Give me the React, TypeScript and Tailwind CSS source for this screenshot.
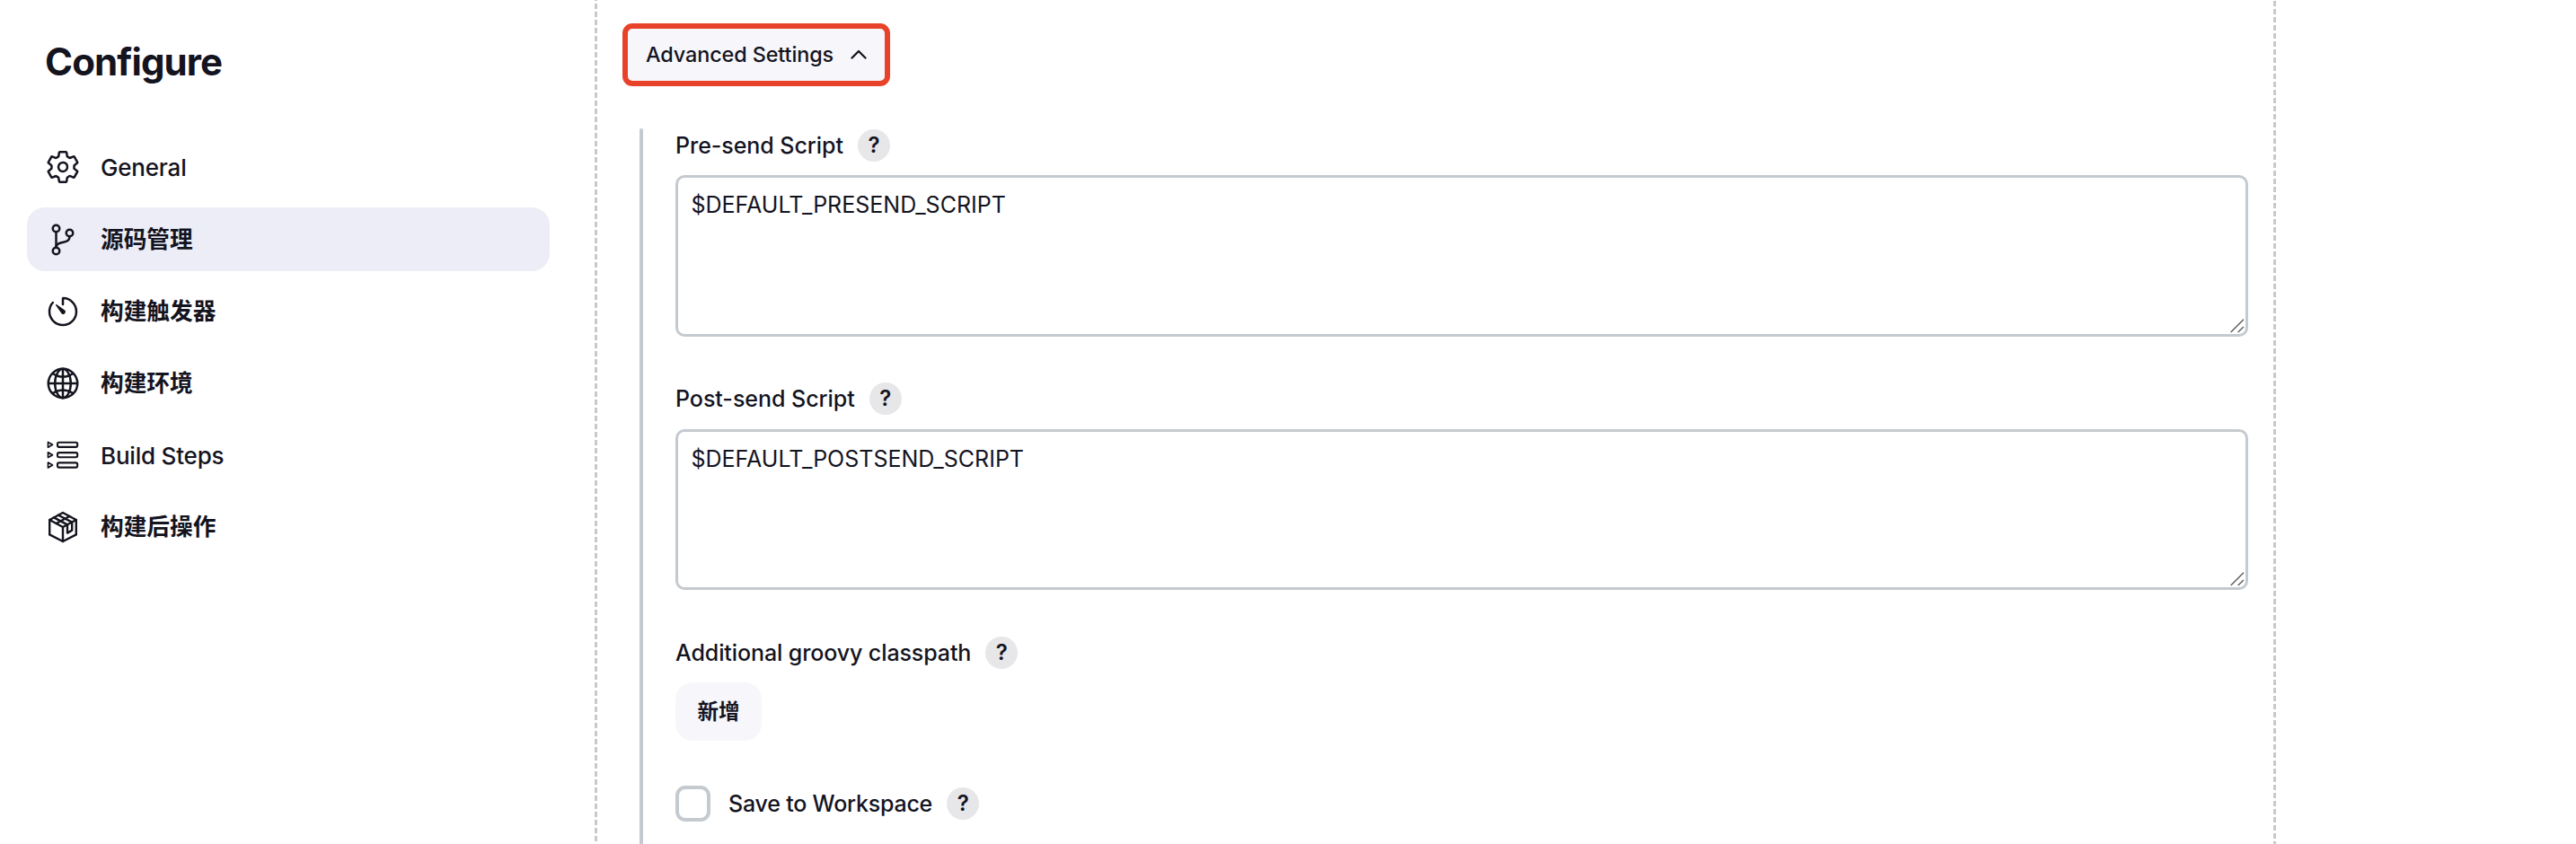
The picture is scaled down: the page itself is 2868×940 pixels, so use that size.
import type { ReactNode } from "react";
import { IoGitBranchOutline, IoGlobeOutline, IoSettingsOutline, IoTimerOutline } from "react-icons/io5";

function StepsIcon() {
  return (
    <svg viewBox="0 0 40 40" className="size-10" fill="none" stroke="currentColor" strokeWidth="2.1" strokeLinejoin="round">
      {[8.3, 19.7, 31].map((y) => (
        <g key={y}>
          <path d={`M3.5 ${y - 2.9}v5.8l5-2.9z`} strokeWidth="1.7" />
          <rect x="14" y={y - 2.6} width="22.2" height="5.2" rx="1.8" />
        </g>
      ))}
    </svg>
  );
}

function PackageIcon() {
  return (
    <svg viewBox="0 0 40 40" className="size-10" fill="none" stroke="currentColor" strokeWidth="2.4" strokeLinejoin="round" strokeLinecap="round">
      <path d="M20 4l14.8 8v16.4L20 36 5.2 28.4V12z" />
      <path d="M5.2 12L20 20l14.8-8M20 20v16" />
      <path d="M10 9.4l15 8V26.6l5.2-3V14.6L15 6.7" />
      <path d="M12.6 16L27.4 8" />
    </svg>
  );
}

function NavItem({ icon, label, active, cjk }: { icon: ReactNode; label: string; active?: boolean; cjk?: boolean }) {
  return (
    <a className={`flex h-[71.2px] items-center gap-[22px] rounded-[20px] pl-5 ${active ? "bg-[#ecedf6]" : ""}`}>
      <span className="flex size-10 items-center justify-center text-[40px]">{icon}</span>
      <span className={cjk ? "text-[25.7px] leading-none font-semibold" : "pt-px text-[26px] leading-none font-medium tracking-[-0.2px]"}>{label}</span>
    </a>
  );
}

function Help() {
  return (
    <button className="ml-4 flex size-9 items-center justify-center rounded-full bg-[#e7e7ea] text-[24px] leading-none font-semibold">?</button>
  );
}

function FieldLabel({ children, className }: { children: ReactNode; className: string }) {
  return (
    <div className={`flex h-9 items-center text-[25px] leading-none font-medium ${className}`}>
      {children}
      <Help />
    </div>
  );
}

function ScriptArea({ value, className }: { value: string; className: string }) {
  return (
    <div className={`relative ${className}`}>
      <textarea
        readOnly
        defaultValue={value}
        className="block h-full w-full resize-none overflow-hidden rounded-[10px] border-3 border-[#c4cacf] bg-white pt-[11px] pl-[14.5px] text-[25px] leading-[38px] outline-none"
      />
      <svg viewBox="0 0 16 16" className="absolute right-1 bottom-1 size-4" stroke="#5f5f5f" strokeWidth="1.5">
        <path d="M0.7 15L15 0.7M8.7 15L15 9" />
      </svg>
    </div>
  );
}

export default function App() {
  return (
    <div className="flex h-[940px] w-[2868px] overflow-hidden bg-white font-[Inter,'Noto_Sans_CJK_SC',sans-serif] text-[#14141f]">
      <aside className="w-[662px] shrink-0 pr-[50px] pl-[30px]">
        <h1 className="pt-12 pl-5 text-[42px] leading-[42px] font-bold tracking-[-0.9px]">Configure</h1>
        <nav className="mt-[60.8px] flex flex-col gap-[9px]">
          <NavItem icon={<IoSettingsOutline />} label="General" />
          <NavItem icon={<IoGitBranchOutline />} label="源码管理" active cjk />
          <NavItem icon={<IoTimerOutline />} label="构建触发器" cjk />
          <NavItem icon={<IoGlobeOutline />} label="构建环境" cjk />
          <NavItem icon={<StepsIcon />} label="Build Steps" />
          <NavItem icon={<PackageIcon />} label="构建后操作" cjk />
        </nav>
      </aside>

      <div className="w-[3px] shrink-0 bg-[linear-gradient(#c6c9cd_6px,transparent_6px)] bg-[length:3px_9px] bg-[position:0_4px]" />

      <main className="flex w-[1866px] shrink-0 flex-col pt-[26px] pr-7">
        <button className="ml-7 flex h-[70px] w-[298px] items-center rounded-[11px] border-6 border-[#e8432a] bg-[#f6f6fb] pl-5 text-[23.4px] leading-none font-medium tracking-[-0.1px]">
          Advanced Settings
          <svg viewBox="0 0 18 12" className="ml-[19px] h-3 w-[18px]" fill="none" stroke="currentColor" strokeWidth="2.3" strokeLinecap="round" strokeLinejoin="round">
            <path d="M1.5 9.5L9 2l7.5 7.5" />
          </svg>
        </button>

        <section className="mt-[47px] ml-[47px] flex flex-1">
          <div className="w-1 shrink-0 rounded-t-[2px] bg-[#c4cacf]" />
          <div className="flex-1 pt-px pl-9">
            <FieldLabel className="tracking-[-0.05px]">Pre-send Script</FieldLabel>
            <ScriptArea className="mt-[15px] h-[180px]" value="$DEFAULT_PRESEND_SCRIPT" />

            <FieldLabel className="mt-[51px] tracking-[-0.03px]">Post-send Script</FieldLabel>
            <ScriptArea className="mt-4 h-[179px]" value="$DEFAULT_POSTSEND_SCRIPT" />

            <FieldLabel className="mt-[52px] tracking-[-0.1px]">Additional groovy classpath</FieldLabel>
            <button className="mt-[15px] flex h-[65px] w-24 items-center justify-center rounded-[19px] bg-[#f6f6fb] text-[23.5px] leading-none font-semibold">
              新增
            </button>

            <div className="mt-[50px] flex h-10 items-center text-[25px] leading-none font-medium tracking-[-0.21px]">
              <span className="mr-5 h-10 w-[39px] rounded-[11px] border-4 border-[#c4cacf]" />
              Save to Workspace
              <Help />
            </div>
          </div>
        </section>
      </main>

      <div className="w-[3px] shrink-0 bg-[linear-gradient(#c6c9cd_6px,transparent_6px)] bg-[length:3px_9px] bg-[position:0_1px]" />
    </div>
  );
}
